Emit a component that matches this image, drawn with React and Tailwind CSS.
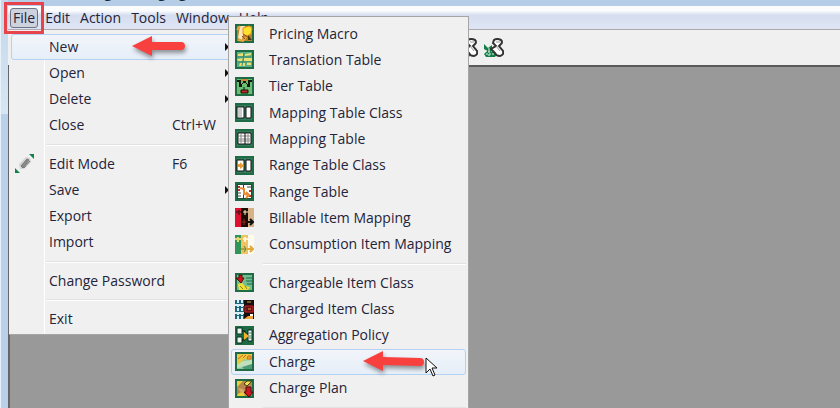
import React from "react";
import clsx from "clsx";

const MENU_BAR = ["Edit", "Action", "Tools", "Window", "Help"];

const FILE_MENU = [
  [
    { label: "New", sub: true, active: true },
    { label: "Open", sub: true },
    { label: "Delete", sub: true },
    { label: "Close", keys: "Ctrl+W" },
  ],
  [
    { label: "Edit Mode", keys: "F6", icon: "edit" },
    { label: "Save", sub: true },
    { label: "Export" },
    { label: "Import" },
  ],
  [{ label: "Change Password" }],
  [{ label: "Exit" }],
];

const NEW_MENU = [
  [
    { label: "Pricing Macro", icon: "macro" },
    { label: "Translation Table", icon: "translation" },
    { label: "Tier Table", icon: "tier" },
    { label: "Mapping Table Class", icon: "mappingClass" },
    { label: "Mapping Table", icon: "mapping" },
    { label: "Range Table Class", icon: "rangeClass" },
    { label: "Range Table", icon: "range" },
    { label: "Billable Item Mapping", icon: "billable" },
    { label: "Consumption Item Mapping", icon: "consumption" },
  ],
  [
    { label: "Chargeable Item Class", icon: "chargeable" },
    { label: "Charged Item Class", icon: "charged" },
    { label: "Aggregation Policy", icon: "aggregation" },
    { label: "Charge", icon: "charge", active: true },
    { label: "Charge Plan", icon: "plan" },
  ],
];

// dark green tile that most of the item icons sit on
const Tile = ({ fill = "#2f8a5c" }) => (
  <rect x="1" y="1" width="17" height="17" fill={fill} stroke="#1f6b45" strokeWidth="2" />
);

const ICONS = {
  edit: (
    <>
      <path d="M14 0h5v5zM0 14v5h5z" fill="#16804a" />
      <path d="M5 15l-1-5 7-7 4 1 1 4-7 7z" fill="#d4d4d4" />
      <path d="M6 12l6-7 2 1-6 8zM9 14l6-7" fill="#8a8a8a" stroke="#777" strokeWidth="1" />
    </>
  ),
  macro: (
    <>
      <Tile fill="#b9812c" />
      <path d="M5 2h5L7 16l-4-2z" fill="#f9e6b8" />
      <path d="M2 6l3-4M3 16l5 1 3-4" stroke="#eda838" strokeWidth="2" fill="none" />
      <path d="M8 4l6-2 3 2-1 6-4 2-4-2z" fill="#fde22c" stroke="#e0901e" />
      <path d="M7 12l3 3M8 10l5 3" stroke="#a4501a" />
      <path d="M13 11l4 5h-4z" fill="#4a3d12" />
    </>
  ),
  translation: (
    <>
      <Tile fill="#58b08a" />
      <path d="M3 4l5-1v3H3zM10 4l6-1v2l-6 1zM2 9l6-1v3H3zM9 8h8v3H9zM5 13h5v3H4zM12 12h4v3h-4z" fill="#e9df72" />
      <path d="M9 3L7 16M2 7h14M3 12h13" stroke="#3c8a6e" fill="none" />
    </>
  ),
  tier: (
    <>
      <Tile fill="#6abf72" />
      <path d="M2 3h4v4h2V3h3v4h2V3h4v2h-2v5h-3V6H7v4H4V5H2z" fill="#17190f" />
      <path d="M6 2h7v2H6z" fill="#c98332" />
      <path d="M9 10v3" stroke="#111" />
      <path d="M6 13h7v3H6z" fill="#c22a1d" stroke="#111" />
    </>
  ),
  mappingClass: (
    <>
      <Tile fill="#347a5c" />
      <path d="M2 4h7v11H2zM11 4h5v11h-5z" fill="#fff" stroke="#111" />
      <path d="M4 4v11M6 4v11" stroke="#999" />
    </>
  ),
  mapping: (
    <>
      <Tile fill="#347a5c" />
      <path d="M3 4h13v11H3z" fill="#fff" stroke="#111" />
      <path d="M6 4v11M13 4v11M3 7h13M3 10h13M3 12h13" stroke="#888" />
      <path d="M10 4v11" stroke="#111" />
    </>
  ),
  rangeClass: (
    <>
      <Tile fill="#347a5c" />
      <path d="M2 4h7v11H2zM11 4h5v11h-5z" fill="#fff" stroke="#111" />
      <path d="M3 8h2V6l4 4-4 3v-2H3z" fill="#ee9a32" />
    </>
  ),
  range: (
    <>
      <Tile fill="#1d4d39" />
      <path d="M3 3h5v13H3zM9 3h7v13H9z" fill="#fff" />
      <path d="M3 5h2M3 8h2M14 9h2M14 14h2" stroke="#b83131" strokeWidth="2" />
      <path d="M3 11h3M3 14h3M12 5h4" stroke="#444" />
      <path d="M5 6l4 1v5l5 1M11 10l3 3-3 3" stroke="#ed8a30" strokeWidth="2" fill="none" />
    </>
  ),
  billable: (
    <>
      <path d="M0 0h6v19H0z" fill="#e01030" />
      <path d="M6 0h7v19H6z" fill="#1a0b05" />
      <path d="M13 0h6v19h-6z" fill="#d6b286" />
      <path d="M1 4h5M4 2v5" stroke="#70101b" strokeWidth="2" />
      <path d="M8 4h5M10 2v5" stroke="#fff0c0" />
      <path d="M5 14h6M9 11v6" stroke="#9d2a18" />
      <path d="M12 14h5M15 11l3 3-3 3" stroke="#111" strokeWidth="2" fill="none" />
    </>
  ),
  consumption: (
    <>
      <path d="M0 0h6v19H0z" fill="#31945b" />
      <path d="M6 0h7v19H6z" fill="#f0c262" />
      <path d="M13 0h6v19h-6z" fill="#fffbed" />
      <path d="M0 4h6M3 2v5" stroke="#e5d66a" strokeWidth="2" />
      <path d="M8 4h5M10 2v5" stroke="#fff4cc" strokeWidth="2" />
      <path d="M5 14h6M9 11l2 3-2 3" stroke="#58862c" fill="none" />
      <path d="M12 14h5M15 11l3 3-3 3" stroke="#e1a83c" strokeWidth="2" fill="none" />
    </>
  ),
  chargeable: (
    <>
      <Tile fill="#73bd91" />
      <path d="M11 5h6M11 8h6M12 11h5" stroke="#1d6948" />
      <path d="M4 2h3v3h2l-3 5-5-5h3z" fill="#d3131c" stroke="#50100c" />
      <path d="M3 11l4-1 3 3 5 1-2 3H4z" fill="#f2df36" />
      <path d="M5 13l3 3M10 13l2 3" stroke="#857b22" />
    </>
  ),
  charged: (
    <>
      <path d="M0 0h19v19H0z" fill="#1d6579" />
      <path d="M0 5h9M0 13h9M3 0v19M7 0v19" stroke="#d5edf4" strokeWidth="2" strokeDasharray="3 1" />
      <path d="M9 0h10v19H9z" fill="#15100f" />
      <path d="M10 6h8v6h-8z" fill="#641117" stroke="#cf1f26" />
      <path d="M12 2h4M13 9h3" stroke="#e0a63b" />
      <path d="M9 19l4-3h5v3z" fill="#f1a33c" />
      <path d="M15 14h3v2h-3z" fill="#fff" />
    </>
  ),
  aggregation: (
    <>
      <Tile fill="#1c6b46" />
      <path d="M2 2h5v6H2zM2 11h5v6H2zM13 4h4v11h-4z" fill="#eaf6ee" stroke="#0d2e1e" />
      <path d="M7 5h3v4M7 14h3v-4M11 8h2" stroke="#111" fill="none" />
      <path d="M9 6l5 4-5 4z" fill="#eeb32b" />
      <path d="M14 7h3M14 10h3M14 12h3" stroke="#4d8067" />
    </>
  ),
  charge: (
    <>
      <Tile fill="#8cc7a0" />
      <path d="M2 2h15v4l-4 2-4-1-4 5-3 1z" fill="#edc63d" />
      <path d="M3 7l5-4M8 6l3-3M13 4h3v3h-4z" stroke="#d26b22" fill="#f5a02c" />
      <path d="M2 13l6-4 9-1v4l-7 3-8 1z" fill="#bfe0b9" />
      <path d="M7 15l10-3v5H9z" fill="#4d9a78" />
    </>
  ),
  plan: (
    <>
      <Tile fill="#b58549" />
      <path d="M2 2h6L2 8zM3 15l5-3 2 5H2z" fill="#e8cf35" />
      <path d="M9 5l3-3h5l-5 5z" fill="#f3e548" stroke="#3f3a12" />
      <path d="M3 9l5 1 2 3-4 1z" fill="#d8a868" />
      <path d="M11 8h5v5h2l-4 5-5-5h2z" fill="#cf1820" stroke="#4c0c0c" />
    </>
  ),
};

function ItemIcon({ name }) {
  return (
    <svg viewBox="0 0 19 19" className="h-[19px] w-[19px] shrink-0" aria-hidden="true">
      {ICONS[name]}
    </svg>
  );
}

function RedArrow({ long, className }) {
  return (
    <svg viewBox="0 0 64 28" className={clsx("absolute h-7 w-16 drop-shadow-[1px_3px_2px_rgba(0,0,0,0.4)]", className)} aria-hidden="true">
      <path
        d={long ? "M1 12L21 2v6l37 1q4 0 4 4t-4 4l-37-1v6z" : "M1 12L21 2v6h29q4 0 4 4t-4 4H21v6z"}
        fill="#f8403f"
      />
    </svg>
  );
}

function Pointer() {
  return (
    <svg viewBox="0 0 12 20" className="absolute top-2 left-[194px] h-5 w-3" aria-hidden="true">
      <path d="M1 1v15l4-4 3 7 2-1-3-7h5z" fill="#fff" stroke="#111" />
    </svg>
  );
}

function Separator({ className }) {
  return (
    <div role="separator" className={clsx("flex h-3 items-center", className)}>
      <div className="h-0.5 w-full border-t border-[#e2e2e2] bg-white" />
    </div>
  );
}

function MenuItem({ item, children }) {
  return (
    <div className="relative flex">
      <button
        className={clsx(
          "flex w-full items-center rounded-[3px] border pl-[3px] text-left",
          item.active ? "border-[#b4d0f2] bg-linear-to-b from-[#f2f5fa] to-[#e6eef8]" : "border-transparent"
        )}
      >
        <span className="flex w-[34px] shrink-0">{item.icon && <ItemIcon name={item.icon} />}</span>
        <span className={item.keys ? "w-[123px]" : "grow"}>{item.label}</span>
        {item.keys}
        {item.sub && (
          <svg viewBox="0 0 5 8" className="h-2 w-[5px]" aria-hidden="true">
            <path d="M0 0l4 4-4 4z" fill="#111" />
          </svg>
        )}
      </button>
      {children}
    </div>
  );
}

function NewMenu() {
  return (
    <div className="absolute -top-[18px] left-[217px] z-10 w-[241px] border border-[#a5a5a5] bg-[#f0f0f0] px-[2px] pt-1 pb-4">
      <div className="grid h-[237px] auto-rows-fr">
        {NEW_MENU[0].map((item) => (
          <MenuItem key={item.label} item={item} />
        ))}
      </div>
      <Separator className="ml-8" />
      <div className="grid h-[132px] auto-rows-fr">
        {NEW_MENU[1].map((item) => (
          <MenuItem key={item.label} item={item}>
            {item.active && (
              <>
                <RedArrow long className="top-0 left-[131px]" />
                <Pointer />
              </>
            )}
          </MenuItem>
        ))}
      </div>
      <Separator className="ml-8" />
    </div>
  );
}

function FileMenu() {
  return (
    <div className="absolute top-[22px] -left-px w-[224px] border-b border-[#a5a5a5] bg-[#f0f0f0] px-[2px] pt-1 pb-[2px]">
      <div className="absolute inset-y-0 left-[35px] w-px bg-white" />
      {FILE_MENU.map((group, i) => (
        <React.Fragment key={i}>
          {i > 0 && <Separator className="ml-[35px]" />}
          <div className={clsx("grid auto-rows-fr", group.length > 1 ? "h-[105px]" : "h-[26px]")}>
            {group.map((item) => (
              <MenuItem key={item.label} item={item}>
                {item.label === "New" && (
                  <>
                    <RedArrow className="top-0 left-[120px]" />
                    <NewMenu />
                  </>
                )}
              </MenuItem>
            ))}
          </div>
        </React.Fragment>
      ))}
    </div>
  );
}

function ToolIcon() {
  return (
    <svg viewBox="0 0 20 20" className="h-5 w-5" aria-hidden="true">
      <path d="M0 6l4 4 4-3v5l5 4-2 3H2l-2-3 3-3-3-2z" fill="#16804a" />
      <path d="M1 13h10M5 10v9M2 16h8" stroke="#e5f2e9" strokeDasharray="2 1" />
      <path d="M10 2q3-2 7 0 2 2 0 4l-2 2 4 5q1 4-3 5-4 0-5-3l-4-4 5-3-3-3z" fill="#fff" stroke="#333" strokeWidth="2" />
      <path d="M12 4h4M12 8l4 5" stroke="#999" />
    </svg>
  );
}

export default function App() {
  return (
    <div className="flex h-screen overflow-hidden bg-[#999999] font-['Open_Sans',sans-serif] text-sm leading-5 text-[#24243a]">
      <div className="flex w-2 shrink-0 flex-col border-l border-[#e8f0f8]">
        <div className="h-[114px] bg-linear-to-b from-[#c3d7ec] to-[#d6e6f4]" />
        <div className="grow bg-[#b8d0e9]" />
      </div>

      <div className="flex min-w-0 grow flex-col">
        {/* title bar, only its lower edge is in view */}
        <header className="flex h-1.5 shrink-0 items-end gap-2 overflow-hidden bg-[#b5cde7] pb-[3px] pl-[58px] leading-5 font-semibold whitespace-nowrap text-[#1c2733]">
          <span>Pricing</span>
          <span>Managing</span>
        </header>

        <nav className="flex h-6 shrink-0 items-center gap-1 border-b border-[#ababab] bg-linear-to-b from-[#fbfcfe] from-20% via-[#d5ddef] via-40% to-[#dfe5f4] pl-[2px]">
          <div className="relative">
            <button className="block rounded-[3px] border border-[#6f7484] bg-[#cdd2de] px-[2px] leading-[18px]">File</button>
            <FileMenu />
            <div className="pointer-events-none absolute -inset-x-[6px] -top-[6px] -bottom-[6px] z-20 border-3 border-[#e8434a]" />
          </div>
          {MENU_BAR.map((label) => (
            <button key={label} className="border border-transparent px-[2px] leading-[18px]">
              {label}
            </button>
          ))}
        </nav>

        <div className="flex h-[37px] shrink-0 items-center gap-1.5 border-b-2 border-[#5a5a5a] bg-[#f0f0f0] pl-[450px]">
          <ToolIcon />
          <ToolIcon />
        </div>
        <main className="grow border-l-2 border-[#666666] bg-[#999999]" />
      </div>
    </div>
  );
}
